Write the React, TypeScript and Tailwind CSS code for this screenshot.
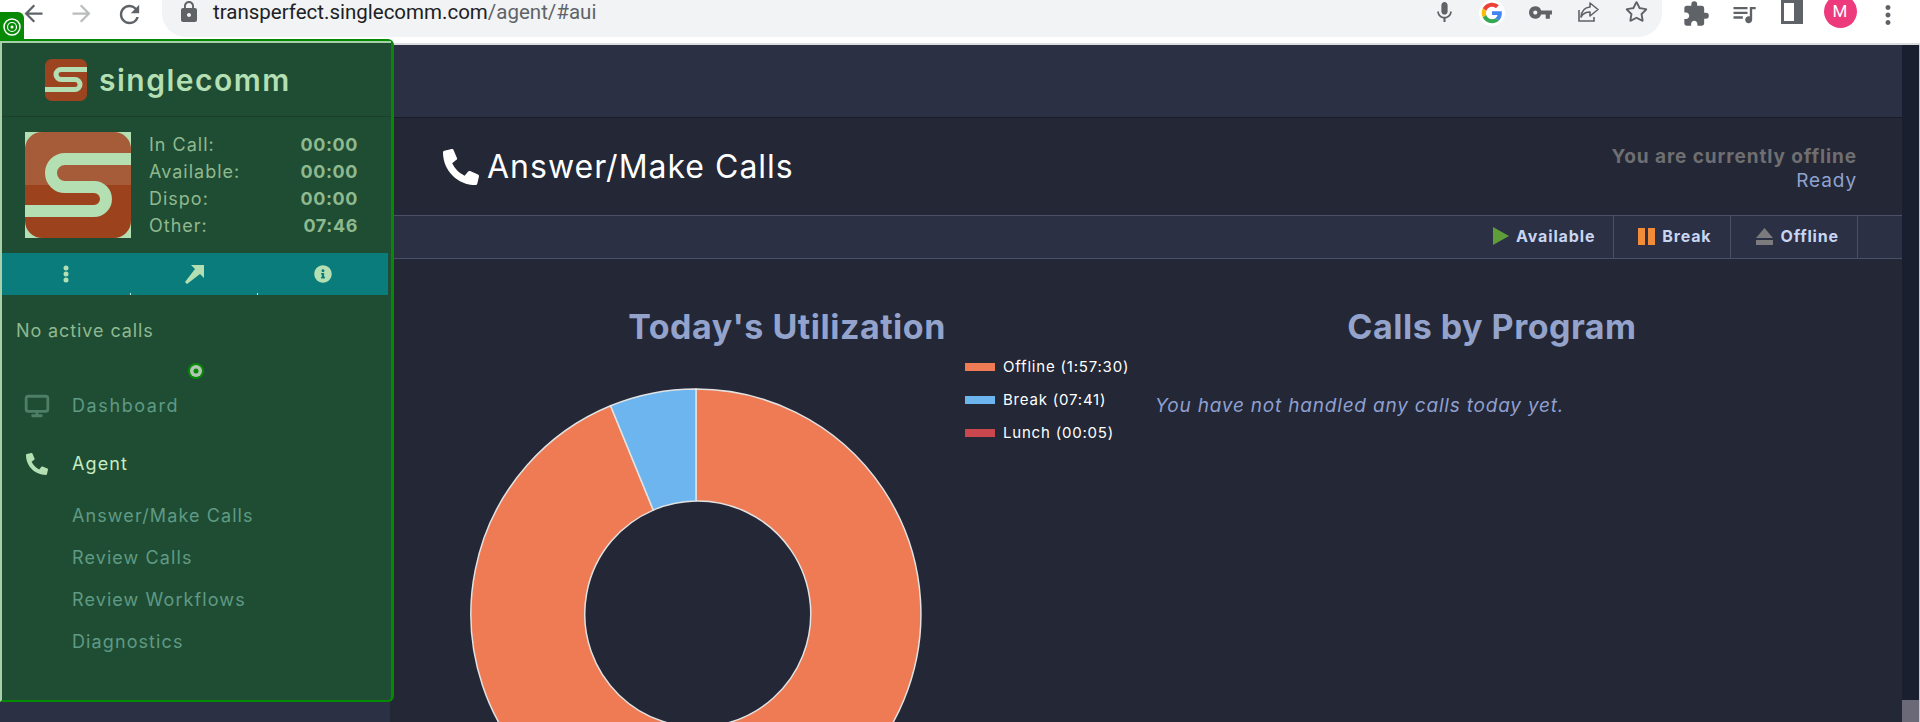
import React from 'react';
import { FaInfoCircle, FaPhoneAlt, FaRegStar } from 'react-icons/fa';
import { MdArrowBack, MdArrowForward, MdExtension, MdLock, MdMic, MdMoreVert, MdQueueMusic, MdRefresh, MdVpnKey } from 'react-icons/md';
import { Monitor } from 'lucide-react';

const stats = [
  { label: 'In Call:', value: '00:00' },
  { label: 'Available:', value: '00:00' },
  { label: 'Dispo:', value: '00:00' },
  { label: 'Other:', value: '07:46' },
];

const subLinks = ['Answer/Make Calls', 'Review Calls', 'Review Workflows', 'Diagnostics'];

const legend = [
  { label: 'Offline (1:57:30)', swatch: 'bg-[#ef7b54]' },
  { label: 'Break (07:41)', swatch: 'bg-[#6db5ef]' },
  { label: 'Lunch (00:05)', swatch: 'bg-[#c9474d]' },
];

const GoogleG = () => (
  <svg width="26" height="26" viewBox="0 0 48 48">
    <circle cx="24" cy="24" r="24" fill="#fff" />
    <g transform="translate(5 5) scale(0.79)">
      <path fill="#EA4335" d="M24 9.5c3.5 0 6.7 1.2 9.2 3.6l6.9-6.9C35.9 2.4 30.5 0 24 0 14.6 0 6.5 5.4 2.6 13.2l8 6.2C12.5 13.7 17.8 9.5 24 9.5z" />
      <path fill="#4285F4" d="M47 24.5c0-1.6-.1-3.100-.4-4.500H24v9h12.900c-.6 3-2.200 5.500-4.800 7.200l7.700 6C44.300 37.600 47 31.600 47 24.500z" />
      <path fill="#FBBC05" d="M10.600 28.600c-.5-1.400-.8-3-.8-4.600s.3-3.200.8-4.600l-8-6.200C.9 16.500 0 20.100 0 24s.9 7.500 2.600 10.800l8-6.200z" />
      <path fill="#34A853" d="M24 48c6.500 0 11.900-2.100 15.900-5.800l-7.700-6c-2.100 1.400-4.900 2.300-8.200 2.300-6.200 0-11.500-4.200-13.400-9.900l-8 6.200C6.500 42.600 14.600 48 24 48z" />
    </g>
  </svg>
);

const ShareIcon = () => (
  <svg width="24" height="24" viewBox="0 0 24 24" fill="none" stroke="#5f6368" strokeWidth="1.6">
    <path d="M3 10v11h15v-4" />
    <path d="M14 3l8 6.500-8 6.500v-4c-4 0-7 1.500-9 5 .5-5.500 3.500-9.500 9-10V3z" strokeLinejoin="round" />
  </svg>
);

const SidePanelIcon = () => (
  <div className="flex h-[24px] w-[22px] border-[3px] border-[#5f6368] bg-white">
    <div className="flex-1" />
    <div className="w-[6px] bg-[#5f6368]" />
  </div>
);

const TargetIcon = () => (
  <svg width="20" height="20" viewBox="0 0 20 20" fill="none" stroke="#fff">
    <circle cx="10" cy="10" r="8" strokeWidth="1.500" />
    <circle cx="10" cy="10" r="4.500" strokeWidth="1.200" />
    <circle cx="10" cy="10" r="1.500" fill="#fff" stroke="none" />
  </svg>
);

const SingleS = ({ size, box, stroke, d, light, dark }: { size: number; box: number; stroke: number; d: string; light: string; dark: string }) => (
  <svg width={size} height={size} viewBox={`0 0 ${box} ${box}`}>
    <defs>
      <linearGradient id={`s-${box}`} x1="0" y1="0" x2="0" y2="1">
        <stop offset="0.5" stopColor={light} />
        <stop offset="0.5" stopColor={dark} />
      </linearGradient>
    </defs>
    <rect width={box} height={box} rx={box * 0.16} fill={`url(#s-${box})`} />
    <path d={d} fill="none" stroke="#b3dfb3" strokeWidth={stroke} />
  </svg>
);

const BrowserBar = () => (
  <div className="flex h-[45px] shrink-0 border-b-2 border-[#dadce0] bg-white pl-[9px] pr-[8px]">
    <div className="flex w-[48px] justify-center text-[#5f6368]"><MdArrowBack size={27} /></div>
    <div className="flex w-[48px] justify-center text-[#babcbe]"><MdArrowForward size={27} /></div>
    <div className="flex w-[48px] justify-center text-[#5f6368]"><MdRefresh size={29} /></div>
    <div className="ml-[9px] flex h-[37px] w-[1500px] items-start rounded-b-[24px] bg-[#f1f3f4] pl-[15px] pr-[2px]">
      <MdLock size={24} className="text-[#5f6368]" />
      <div className="ml-[12px] h-[26px] flex-1 font-['Roboto',sans-serif] text-[20.5px] leading-[24px] text-[#5f6368]">
        <span className="text-[#202124]">transperfect.singlecomm.com</span>/agent/#aui
      </div>
      <div className="flex w-[48px] justify-center text-[#5f6368]"><MdMic size={25} /></div>
      <div className="flex w-[48px] justify-center"><GoogleG /></div>
      <div className="flex w-[48px] justify-center text-[#5f6368]"><MdVpnKey size={25} /></div>
      <div className="flex w-[48px] justify-center"><ShareIcon /></div>
      <div className="flex w-[48px] justify-center text-[#5f6368]"><FaRegStar size={23} /></div>
    </div>
    <div className="ml-[10px] flex w-[48px] justify-center text-[#5f6368]"><MdExtension size={28} /></div>
    <div className="flex w-[48px] justify-center text-[#5f6368]"><MdQueueMusic size={28} /></div>
    <div className="flex w-[48px] justify-center"><SidePanelIcon /></div>
    <div className="flex w-[48px] justify-center">
      <div className="-mt-[5px] flex h-[33px] w-[33px] items-center justify-center rounded-full bg-[#ec3a7c] font-['Roboto',sans-serif] text-[17px] text-white">M</div>
    </div>
    <div className="flex w-[48px] justify-center text-[#5f6368]"><MdMoreVert size={30} /></div>
  </div>
);

const Sidebar = () => (
  <div className="relative z-10 -mt-[6px] h-[663px] w-[394px] rounded-r-md border-t-2 border-r-[3px] border-b-[2px] border-l-2 border-[#068a06] border-l-[#a8d0a8] bg-[#1f4d33]">
    <div className="absolute -top-[29px] -left-[2px] flex h-[29px] w-[24px] items-center justify-center rounded-tr-md bg-[#068a06]">
      <TargetIcon />
    </div>
    <div className="flex h-[76px] items-center border-t-2 border-b border-t-[#a8d0a8] border-b-[#1a3f2a] pl-[43px]">
      <SingleS size={42} box={42} stroke={5} light="#9c431f" dark="#9c431f" d="M42 10.500H16a5 5 0 0 0 0 10H30a5 5 0 0 1 0 10H0" />
      <span className="ml-[12px] text-[30px] leading-none font-semibold tracking-[1.5px] text-[#b3dfb3]">singlecomm</span>
    </div>
    <div className="flex h-[136px] pt-[15px] pl-[23px]">
      <div className="h-[106px] w-[106px] bg-[#b3dfb3]">
        <SingleS size={106} box={106} stroke={12} light="#a65c38" dark="#9c431d" d="M106 27H40a14 14 0 0 0 0 28H69a12 12 0 0 1 0 24H0" />
      </div>
      <div className="-mt-[1px] ml-[18px] w-[209px] text-[18px] leading-[27px] tracking-[1px] text-[#8fb98f]">
        {stats.map(s => (
          <div key={s.label} className="flex justify-between">
            <span>{s.label}</span>
            <span className="font-bold tracking-[0.6px]">{s.value}</span>
          </div>
        ))}
      </div>
    </div>
    <div className="relative flex h-[42px] w-[386px] items-center bg-[#0a7c7c] text-[#b3dfb3]">
      <div className="flex w-[128px] justify-center">
        <svg width="8" height="18" viewBox="0 0 8 18" fill="currentColor">
          <circle cx="4" cy="3" r="2.500" /><circle cx="4" cy="9" r="2.500" /><circle cx="4" cy="15" r="2.500" />
        </svg>
      </div>
      <div className="relative flex h-full w-[128px] items-center justify-center">
        <svg width="20" height="20" viewBox="0 0 20 20" fill="currentColor">
          <path d="M7 1h13v13l-4-4-13 10-2-2L11 5z" />
        </svg>
        <div className="absolute bottom-0 left-0 h-[2px] w-[1px] bg-[#c8e8d8]" />
        <div className="absolute right-0 bottom-0 h-[2px] w-[1px] bg-[#c8e8d8]" />
      </div>
      <div className="flex w-[130px] justify-center"><FaInfoCircle size={18} /></div>
    </div>
    <div className="px-[14px] pt-[24px] text-[18px] leading-[24px] tracking-[0.9px] text-[#8fb98f]">No active calls</div>
    <div className="flex justify-center pt-[19px] pr-[2px]">
      <svg width="18" height="18" viewBox="0 0 18 18">
        <circle cx="9" cy="9" r="8" fill="#068a06" />
        <circle cx="9" cy="9" r="6" fill="#b3c4b3" />
        <circle cx="9" cy="9" r="2.500" fill="#068a06" />
      </svg>
    </div>
    <div className="flex items-center pt-[13px] pl-[22px] text-[18px] leading-[24px] tracking-[1.6px] text-[#5f9a85]">
      <Monitor size={26} strokeWidth={2.600} className="text-[#4d7f66]" />
      <span className="ml-[22px]">Dashboard</span>
    </div>
    <div className="flex items-center pt-[33px] pl-[24px] text-[18px] leading-[24px] tracking-[1.1px] text-[#c6ebc2]">
      <FaPhoneAlt size={22} className="text-[#b3dfb3]" />
      <span className="ml-[24px]">Agent</span>
    </div>
    <div className="pt-[19px] pl-[70px] text-[18px] leading-[42px] tracking-[1.1px] text-[#5f9a85]">
      {subLinks.map(link => <div key={link}>{link}</div>)}
    </div>
  </div>
);

const Donut = () => (
  <svg width="452" height="452" viewBox="0 0 452 452" className="mt-[39px] shrink-0">
    <path
      d="M226 1A225 225 0 1 1 140.600 17.800L183.300 122.100A113 113 0 1 0 226 113Z"
      fill="#ef7b54" stroke="#e2e2e2" strokeWidth="1.500" />
    <path
      d="M226 1V113A113 113 0 0 0 183.300 122.100L140.600 17.800A225 225 0 0 1 226 1Z"
      fill="#6db5ef" stroke="#e2e2e2" strokeWidth="1.500" />
  </svg>
);

const Toolbar = () => (
  <div className="flex h-[44px] shrink-0 justify-end border-y border-[#4a5068] bg-[#2b3044] pr-[44px] pb-[2px] text-[16px] font-bold tracking-[0.85px] text-[#c8d5f2]">
    <div className="-mb-[2px] flex items-center border-r border-[#4a5068] pr-[18px] pb-[2px]">
      <svg width="16" height="18" viewBox="0 0 16 18"><path d="M0 0l16 9-16 9z" fill="#5f9c3a" /></svg>
      <span className="ml-[7px]">Available</span>
    </div>
    <div className="-mb-[2px] flex items-center border-r border-[#4a5068] pr-[19px] pb-[2px] pl-[24px]">
      <div className="flex gap-[3px]">
        <div className="h-[17px] w-[7px] bg-[#f28c38]" />
        <div className="h-[17px] w-[7px] bg-[#f28c38]" />
      </div>
      <span className="ml-[7px]">Break</span>
    </div>
    <div className="-mb-[2px] flex items-center border-r border-[#4a5068] pr-[18px] pb-[2px] pl-[25px]">
      <svg width="17" height="17" viewBox="0 0 17 17" fill="#7b7b7d"><path d="M8.500 0L17 10H0z" /><rect y="12" width="17" height="5" /></svg>
      <span className="ml-[7px]">Offline</span>
    </div>
  </div>
);

const App: React.FC = () => (
  <div className="flex h-[722px] w-full flex-col overflow-hidden bg-[#232736] font-['Inter',sans-serif]">
    <BrowserBar />
    <div className="flex min-h-0 flex-1">
      <div className="w-[390px] shrink-0 bg-[#2b3044]">
        <Sidebar />
      </div>
      <div className="flex min-w-0 flex-1 flex-col">
        <div className="h-[73px] shrink-0 border-b border-[#1a1d28] bg-[#2b3044]" />
        <div className="flex h-[97px] shrink-0 items-center justify-between pr-[45px] pl-[53px]">
          <div className="flex items-center text-white">
            <FaPhoneAlt size={36} />
            <span className="ml-[8px] text-[32px] tracking-[1px]">Answer/Make Calls</span>
          </div>
          <div className="pt-[5px] text-right text-[19px] leading-[24px] tracking-[0.9px]">
            <div className="font-bold text-[#6f6f72]">You are currently offline</div>
            <div className="text-[#8fa3d0]">Ready</div>
          </div>
        </div>
        <Toolbar />
        <div className="flex min-h-0 flex-1 overflow-hidden pt-[46px] pl-[80px]">
          <div className="w-[634px] shrink-0">
            <h2 className="text-center text-[34px] leading-[44px] font-bold tracking-[0.5px] text-[#94a3cc]">Today's Utilization</h2>
            <div className="flex">
              <Donut />
              <div className="ml-[43px] pt-[1px] text-[15px] leading-[33px] tracking-[0.8px] whitespace-nowrap text-white">
                {legend.map(l => (
                  <div key={l.label} className="flex items-center">
                    <div className={`h-[8px] w-[30px] ${l.swatch}`} />
                    <span className="ml-[8px]">{l.label}</span>
                  </div>
                ))}
              </div>
            </div>
          </div>
          <div className="ml-[51px] w-[674px] shrink-0">
            <h2 className="text-center text-[34px] leading-[44px] font-bold tracking-[0.5px] text-[#94a3cc]">Calls by Program</h2>
            <p className="pt-[43px] text-[19px] leading-[28px] tracking-[0.8px] text-[#8fa0d0] italic">You have not handled any calls today yet.</p>
          </div>
        </div>
      </div>
      <div className="flex w-[18px] shrink-0 flex-col justify-end border-r border-[#c8c8cc] bg-[#1a1f30]">
        <div className="h-[22px] bg-[#6b6877]" />
      </div>
    </div>
  </div>
);

export default App;
